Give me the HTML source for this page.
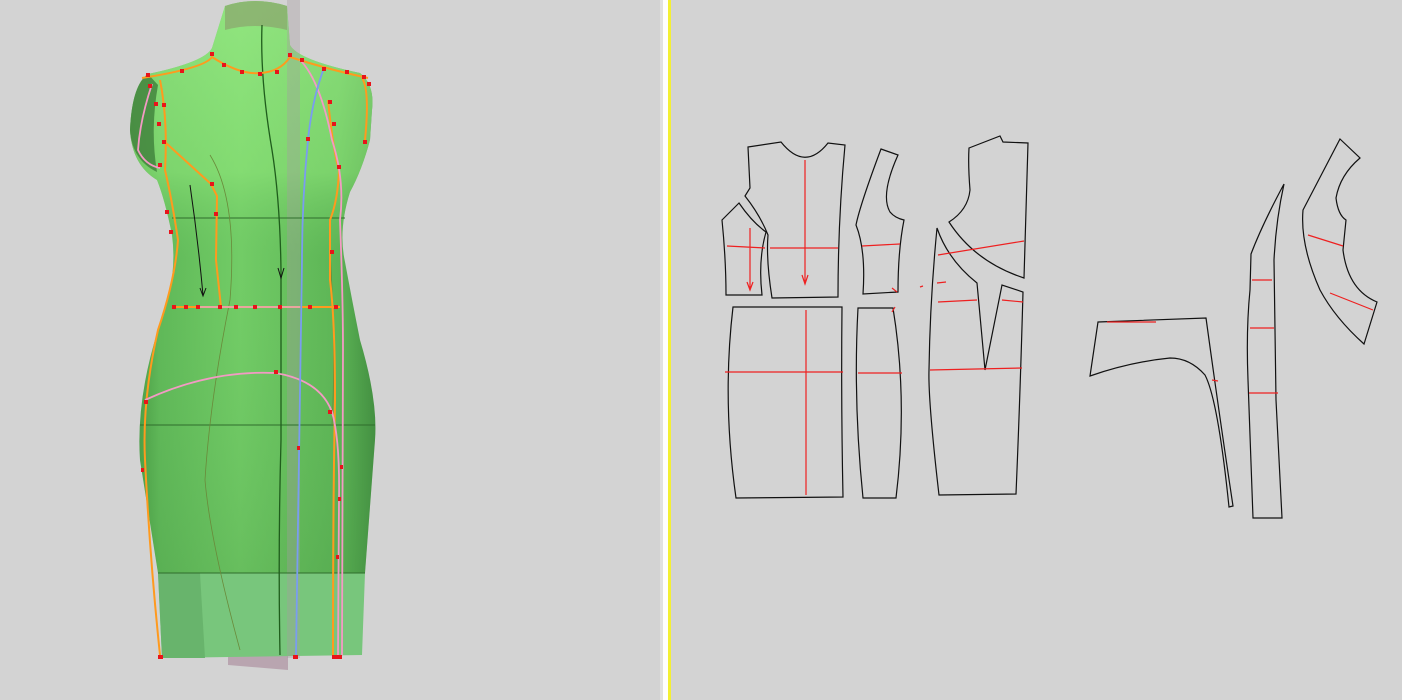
<!DOCTYPE html>
<html><head><meta charset="utf-8"><style>
html,body{margin:0;padding:0;background:#d3d3d3;width:1402px;height:700px;overflow:hidden}
svg{position:absolute;left:0;top:0}
</style></head><body>
<svg width="1402" height="700" viewBox="0 0 1402 700" xmlns="http://www.w3.org/2000/svg">
<defs>
<linearGradient id="gh" x1="0" x2="1" y1="0" y2="0">
<stop offset="0" stop-color="#3f8f3c"/><stop offset="0.12" stop-color="#5fb858"/>
<stop offset="0.45" stop-color="#72cc66"/><stop offset="0.85" stop-color="#5cb455"/><stop offset="1" stop-color="#3f8a3e"/>
</linearGradient>
<linearGradient id="gv" x1="0" x2="0" y1="0" y2="1">
<stop offset="0" stop-color="#9ef08a" stop-opacity="0.7"/><stop offset="0.3" stop-color="#8fe67a" stop-opacity="0.6"/>
<stop offset="0.45" stop-color="#70c865" stop-opacity="0"/><stop offset="1" stop-color="#4e9e4a" stop-opacity="0.3"/>
</linearGradient>
</defs>
<rect width="1402" height="700" fill="#d3d3d3"/>
<!-- divider -->
<rect x="660" y="0" width="3" height="700" fill="#e2e2e2"/>
<rect x="663" y="0" width="5" height="700" fill="#ffffff"/>
<rect x="668" y="0" width="3" height="700" fill="#f4f034"/>
<!-- stand base -->
<path d="M228,655 L288,655 L288,670 L228,665 Z" fill="#b9a5b0"/>
<!-- body -->
<path d="M225,6 Q255,-4 287,6 L290,45 Q298,60 360,73 Q375,85 372,110 L370,140 Q362,170 350,192 Q338,230 345,262 Q352,300 360,340 Q378,400 375,440 L365,573 L158,573 L140,460 Q136,400 158,330 Q178,280 172,235 Q165,200 157,180 Q132,165 130,130 Q132,85 148,74 Q205,62 212,48 Z" fill="url(#gh)"/>
<path d="M225,6 Q255,-4 287,6 L290,45 Q298,60 360,73 Q375,85 372,110 L370,140 Q362,170 350,192 Q338,230 345,262 Q352,300 360,340 Q378,400 375,440 L365,573 L158,573 L140,460 Q136,400 158,330 Q178,280 172,235 Q165,200 157,180 Q132,165 130,130 Q132,85 148,74 Q205,62 212,48 Z" fill="url(#gv)"/>
<path d="M225,6 Q255,-4 287,6 L287,30 Q255,22 225,30 Z" fill="#8a9a6a" opacity="0.6"/>
<path d="M148,74 Q132,85 130,130 Q132,160 157,172 Q150,130 158,85 Z" fill="#3f7f3b" opacity="0.8"/>
<!-- lower skirt translucent -->
<path d="M158,573 L365,573 L362,655 L162,658 Z" fill="#78c67c"/>
<path d="M158,573 L200,573 L205,658 L162,658 Z" fill="#68b46c"/>
<!-- center translucent strip -->
<rect x="287" y="0" width="13" height="658" fill="#a59aa0" opacity="0.35"/>
<!-- horizontal lines -->
<path d="M172,218 L345,218 M140,425 L375,425 M158,573 L365,573" stroke="#2f6d2c" stroke-width="1" fill="none"/>
<!-- center line -->
<path d="M262,25 Q260,80 272,150 Q280,200 281,270 L281,440 Q278,550 280,655" stroke="#1f5d1c" stroke-width="1.3" fill="none"/>
<path d="M210,155 Q238,200 230,300 Q210,400 205,480 Q210,540 240,650 M330,250 Q336,350 332,425" stroke="#6a8a3a" stroke-width="0.8" fill="none"/>
<!-- orange lines -->
<g stroke="#ff9a1e" stroke-width="2" fill="none">
<path d="M142,78 Q205,68 212,57 Q240,75 260,73 Q280,72 290,57 Q330,70 368,78"/>
<path d="M160,80 Q168,120 165,170 Q172,200 178,240 Q175,280 158,330 Q142,400 145,460 Q150,560 160,655"/>
<path d="M166,143 Q190,165 211,184 L217,196 L216,260 L221,307"/>
<path d="M173,307 L340,307"/>
<path d="M328,100 Q333,150 339,170 Q338,200 330,220 L330,280 Q335,320 335,400 Q333,500 333,655"/>
<path d="M362,78 Q370,90 365,140"/>
</g>
<!-- pink lines -->
<g stroke="#f39ac4" stroke-width="1.8" fill="none">
<path d="M145,400 Q210,370 275,373 Q320,380 332,412 Q340,440 339,500 L338,655"/>
<path d="M300,60 Q320,80 332,140 Q345,180 340,220 Q343,300 343,350 L342,655"/>
<path d="M152,84 Q140,120 138,150 Q145,165 160,168"/>
<path d="M200,307 L300,307" stroke="#e8a6b0"/>
</g>
<!-- blue line -->
<path d="M324,68 Q312,100 308,140 Q302,200 302,260 Q300,400 296,655" stroke="#7a9cf0" stroke-width="1.8" fill="none"/>
<!-- arrows -->
<path d="M190,185 Q198,240 203,295 M200,288 L203,296 L206,288 M278,268 L281,278 L284,268" stroke="#111" stroke-width="1" fill="none"/>
<!-- red points -->
<g fill="#e8141a">
<rect x="146" y="73" width="4" height="4"/><rect x="180" y="69" width="4" height="4"/><rect x="210" y="52" width="4" height="4"/><rect x="222" y="63" width="4" height="4"/><rect x="240" y="70" width="4" height="4"/><rect x="258" y="72" width="4" height="4"/><rect x="275" y="70" width="4" height="4"/><rect x="288" y="53" width="4" height="4"/><rect x="300" y="58" width="4" height="4"/><rect x="322" y="67" width="4" height="4"/><rect x="345" y="70" width="4" height="4"/><rect x="362" y="75" width="4" height="4"/><rect x="367" y="82" width="4" height="4"/>
<rect x="148" y="84" width="4" height="4"/><rect x="154" y="102" width="4" height="4"/><rect x="162" y="103" width="4" height="4"/><rect x="157" y="122" width="4" height="4"/><rect x="162" y="140" width="4" height="4"/><rect x="158" y="163" width="4" height="4"/><rect x="165" y="210" width="4" height="4"/><rect x="169" y="230" width="4" height="4"/><rect x="210" y="182" width="4" height="4"/><rect x="214" y="212" width="4" height="4"/>
<rect x="306" y="137" width="4" height="4"/><rect x="328" y="100" width="4" height="4"/><rect x="332" y="122" width="4" height="4"/><rect x="337" y="165" width="4" height="4"/><rect x="330" y="250" width="4" height="4"/><rect x="363" y="140" width="4" height="4"/>
<rect x="172" y="305" width="4" height="4"/><rect x="184" y="305" width="4" height="4"/><rect x="196" y="305" width="4" height="4"/><rect x="218" y="305" width="4" height="4"/><rect x="234" y="305" width="4" height="4"/><rect x="253" y="305" width="4" height="4"/><rect x="278" y="305" width="4" height="4"/><rect x="308" y="305" width="4" height="4"/><rect x="334" y="305" width="4" height="4"/>
<rect x="144" y="400" width="4" height="4"/><rect x="274" y="370" width="4" height="4"/><rect x="328" y="410" width="4" height="4"/><rect x="297" y="446" width="3" height="4"/><rect x="340" y="465" width="3" height="4"/><rect x="338" y="497" width="3" height="4"/><rect x="336" y="555" width="3" height="4"/><rect x="141" y="468" width="3" height="4"/>
<rect x="158" y="655" width="5" height="4"/><rect x="293" y="655" width="5" height="4"/><rect x="332" y="655" width="10" height="4"/>
</g>
<!-- pattern pieces -->
<g stroke="#111" stroke-width="1.2" fill="none">
<path d="M748,147 L781,142 Q805,172 828,143 L845,145 Q838,220 838,297 L772,298 Q766,260 768,235 Q760,215 745,196 L750,188 Z"/>
<path d="M722,220 L739,203 Q752,222 766,232 Q758,260 762,295 L726,295 Q726,260 722,220 Z"/>
<path d="M733,307 L842,307 Q841,400 843,497 L736,498 Q722,400 733,307 Z"/>
<path d="M881,149 L898,155 Q880,195 890,212 Q895,218 904,220 Q898,250 898,292 L863,294 Q866,250 856,225 Q860,205 881,149 Z"/>
<path d="M858,308 L893,308 Q908,400 896,498 L863,498 Q853,400 858,308 Z"/>
<path d="M969,148 L1000,136 L1003,142 L1028,143 L1024,278 Q975,262 949,222 Q968,210 970,190 Q968,165 969,148 Z"/>
<path d="M937,228 Q948,260 977,283 L985,370 L1002,285 L1023,292 Q1020,400 1016,494 L939,495 Q928,400 929,370 Q930,300 937,228 Z"/>
<path d="M1098,322 L1206,318 Q1220,420 1233,506 L1229,507 Q1218,400 1205,375 Q1190,358 1170,358 Q1130,362 1090,376 Z"/>
<path d="M1284,184 Q1262,225 1251,254 L1250,290 Q1246,330 1248,380 L1253,518 L1282,518 L1276,400 L1274,260 Q1276,220 1284,184 Z"/>
<path d="M1340,139 L1360,158 Q1340,175 1336,198 Q1338,215 1346,220 L1343,250 Q1348,290 1377,302 L1364,344 Q1335,318 1320,290 Q1300,245 1303,210 Z"/>
</g>
<g stroke="#ee2020" stroke-width="1.2" fill="none">
<path d="M805,160 L805,282 M802,275 L805,284 L808,275 M770,248 L838,248 M727,246 L765,248 M750,228 L750,288 M747,282 L750,290 L753,282"/>
<path d="M806,310 L806,495 M725,372 L843,372"/>
<path d="M862,246 L900,244 M858,373 L902,373 M892,288 L897,292 M892,312 L895,307 M920,287 L923,286"/>
<path d="M938,255 L1024,241 M938,302 L977,300 M1002,300 L1023,302 M930,370 L1022,368 M937,283 L946,282"/>
<path d="M1107,322 L1156,322 M1212,380 L1218,381"/>
<path d="M1252,280 L1272,280 M1250,328 L1274,328 M1249,393 L1278,393"/>
<path d="M1308,235 L1343,246 M1330,293 L1373,310"/>
</g>
</svg>
</body></html>
